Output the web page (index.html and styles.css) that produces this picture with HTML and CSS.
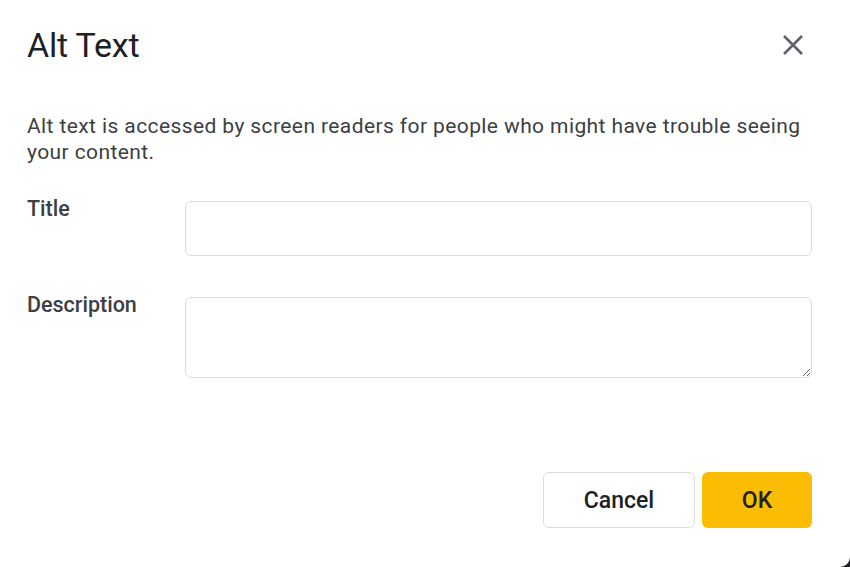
FILE: index.html
```html
<!DOCTYPE html>
<html lang="en">
<head>
<meta charset="utf-8">
<title>Alt Text</title>
<link rel="stylesheet" href="styles.css">
</head>
<body>
<div class="dialog">
  <div class="header">
    <h1 class="title">Alt Text</h1>
    <button class="close" aria-label="Close">
      <svg width="24" height="24" viewBox="0 0 24 24"><path d="M3 3 L21 21 M21 3 L3 21" stroke="#5f6368" stroke-width="2.6" fill="none"/></svg>
    </button>
  </div>
  <p class="intro">Alt text is accessed by screen readers for people who might have trouble seeing your content.</p>
  <div class="form">
    <label class="label" for="t">Title</label>
    <input class="field" id="t" type="text">
    <label class="label" for="d">Description</label>
    <textarea class="field area" id="d"></textarea>
  </div>
  <div class="actions">
    <button class="btn cancel">Cancel</button>
    <button class="btn ok">OK</button>
  </div>
</div>
</body>
</html>
```
FILE: styles.css
```css
html, body {
  margin: 0;
  padding: 0;
  background: #202124;
}
body {
  width: 850px;
  height: 567px;
  overflow: hidden;
}
.dialog {
  box-sizing: border-box;
  width: 850px;
  height: 567px;
  background: #fff;
  border-bottom-right-radius: 10px;
  padding: 20px 38px 0 27px;
  font-family: Roboto, "Liberation Sans", sans-serif;
  color: #3c4043;
  display: flex;
  flex-direction: column;
}
.header {
  display: flex;
  align-items: center;
  justify-content: space-between;
  height: 50px;
}
.title {
  margin: 0;
  font-size: 34px;
  font-weight: 400;
  color: #202124;
  letter-spacing: -0.2px;
}
.close {
  border: 0;
  background: none;
  padding: 0;
  width: 24px;
  height: 24px;
  margin-right: 7px;
  display: flex;
}
.intro {
  margin: 43px 0 0;
  font-size: 21px;
  line-height: 26px;
  letter-spacing: 0.4px;
}
.form {
  display: grid;
  grid-template-columns: 158px 1fr;
  row-gap: 41px;
  margin-top: 36px;
}
.label {
  font-size: 21.5px;
  font-weight: 500;
  color: #3c4043;
  line-height: 24px;
  margin-top: -4px;
}
.field {
  box-sizing: border-box;
  width: 100%;
  height: 55px;
  border: 1.5px solid #dadce0;
  border-radius: 6px;
  margin: 0;
  font: inherit;
}
.area {
  height: 81px;
  resize: vertical;
  display: block;
}
.actions {
  display: flex;
  justify-content: flex-end;
  gap: 7px;
  margin-top: 94px;
}
.btn {
  height: 56px;
  border-radius: 6px;
  font-family: Roboto, "Liberation Sans", sans-serif;
  font-size: 23px;
  font-weight: 500;
  color: #202124;
  cursor: pointer;
}
.cancel {
  width: 152px;
  background: #fff;
  border: 1.5px solid #dadce0;
}
.ok {
  width: 110px;
  background: #fbbc04;
  border: 0;
}
```
